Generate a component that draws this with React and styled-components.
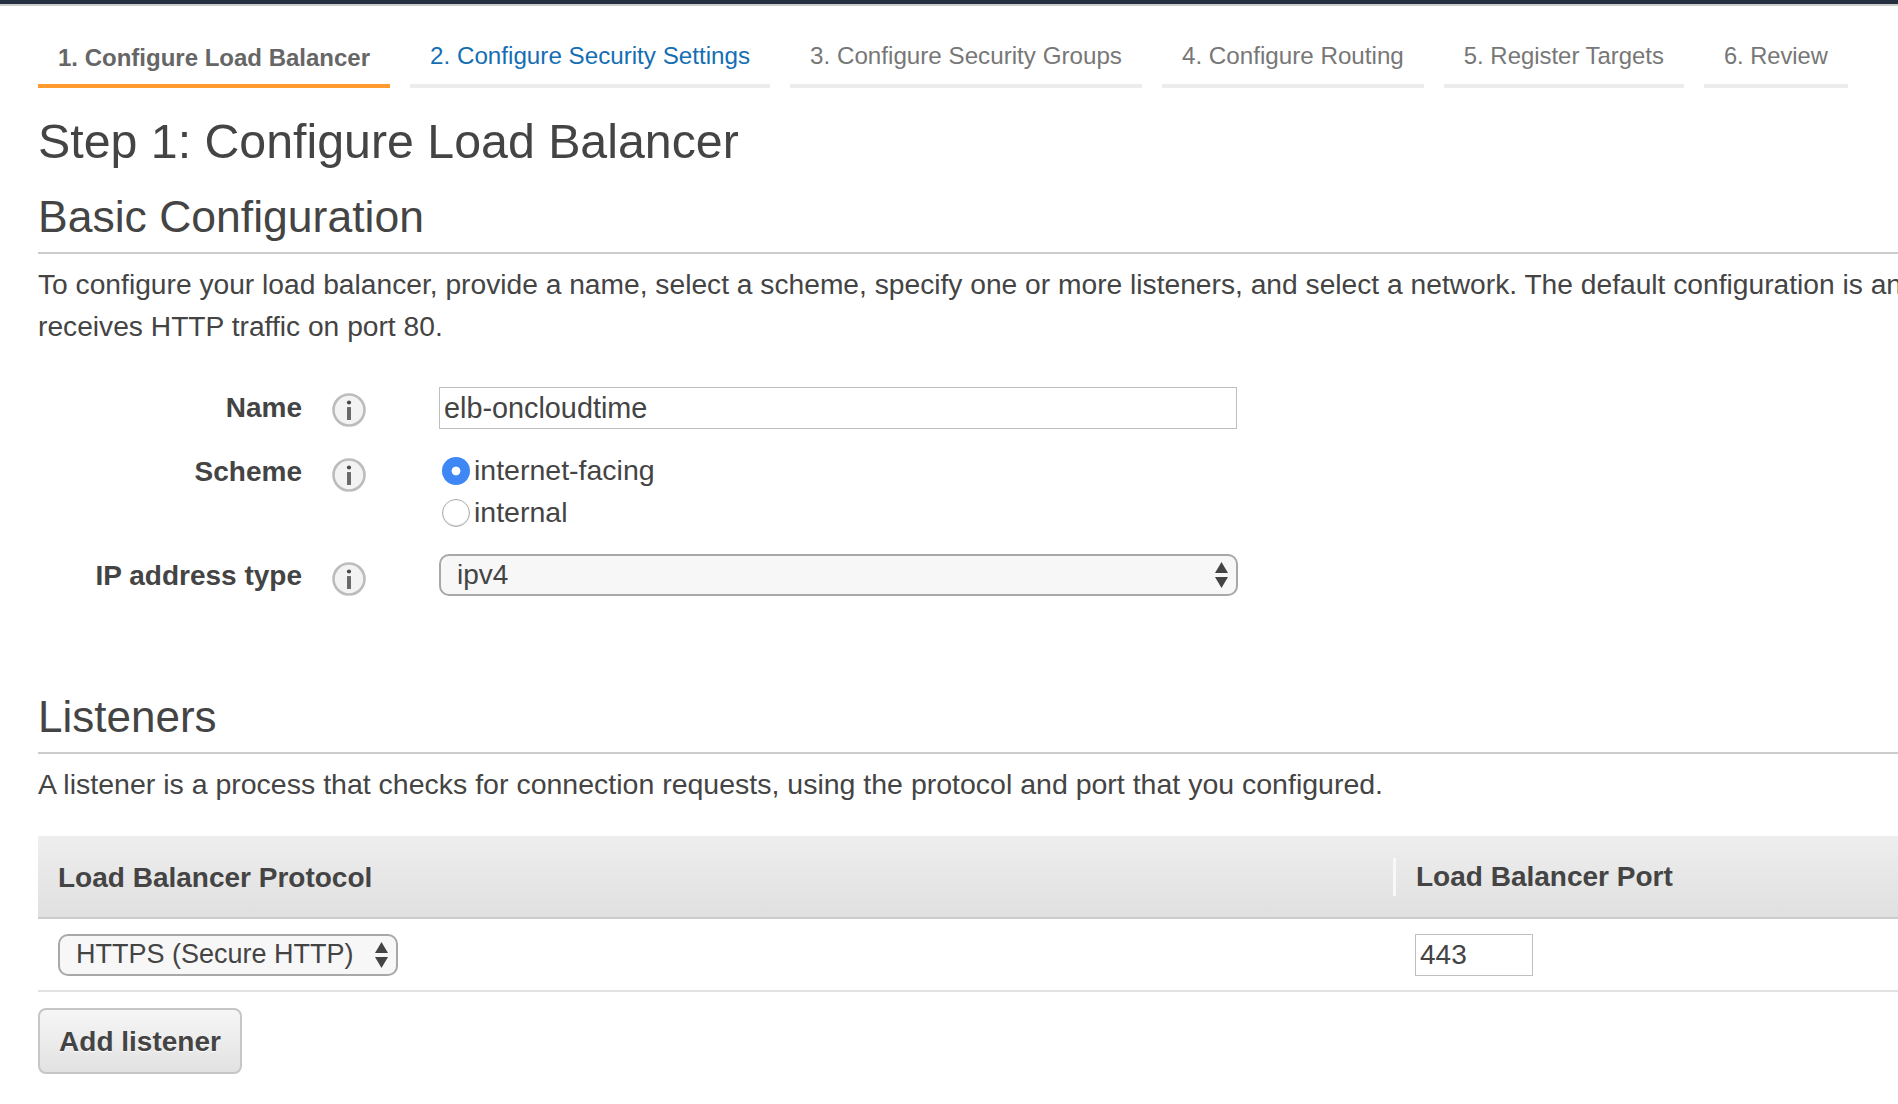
import styled, { createGlobalStyle } from "styled-components";

const GlobalStyle = createGlobalStyle`
    html, body {
        margin: 0;
        background: #fff;
        overflow-x: hidden;
    }
    body {
        font-family: "Liberation Sans", Arial, sans-serif;
        color: #444;
    }
`

const steps = [
    { label: "1. Configure Load Balancer", state: "active", size: "24px" },
    { label: "2. Configure Security Settings", state: "link", size: "24.2px" },
    { label: "3. Configure Security Groups", size: "24.2px" },
    { label: "4. Configure Routing", size: "24.2px" },
    { label: "5. Register Targets", size: "23.9px" },
    { label: "6. Review", size: "23.7px" },
]

export default function App() {
    return (
        <>
            <GlobalStyle />
            <TopBar />
            <Page>
                <Tabs>
                    {steps.map((s) => <Tab key={s.label} $state={s.state} $size={s.size}>{s.label}</Tab>)}
                </Tabs>
                <Title>Step 1: Configure Load Balancer</Title>
                <Section $size="44.5px">Basic Configuration</Section>
                <Text>
                    <div>To configure your load balancer, provide a name, select a scheme, specify one or more listeners, and select a network. The default configuration is an</div>
                    <div>receives HTTP traffic on port 80.</div>
                </Text>
                <Form>
                    <FormRow>
                        <Label>Name</Label>
                        <InfoIcon />
                        <TextBox>elb-oncloudtime</TextBox>
                    </FormRow>
                    <FormRow $shift>
                        <Label $low>Scheme</Label>
                        <InfoIcon low />
                        <div>
                            <RadioRow><Radio $checked /><RadioText>internet-facing</RadioText></RadioRow>
                            <RadioRow><Radio /><RadioText>internal</RadioText></RadioRow>
                        </div>
                    </FormRow>
                    <FormRow>
                        <Label $low>IP address type</Label>
                        <InfoIcon low />
                        <Select $pad="16px">ipv4<Arrows /></Select>
                    </FormRow>
                </Form>
                <Section $gap $size="44px">Listeners</Section>
                <Text $wide>
                    <div>A listener is a process that checks for connection requests, using the protocol and port that you configured.</div>
                </Text>
                <TableHead>
                    <HeadCell>Load Balancer Protocol</HeadCell>
                    <Divided>Load Balancer Port</Divided>
                </TableHead>
                <TableRow>
                    <Cell>
                        <Select $pad="16px" $width="340px" $small>HTTPS (Secure HTTP)<Arrows /></Select>
                    </Cell>
                    <Cell $second>
                        <PortBox>443</PortBox>
                    </Cell>
                </TableRow>
                <AddButton>Add listener</AddButton>
            </Page>
        </>
    )
}

function InfoIcon({ low }) {
    return (
        <IconWrap $low={low}>
            <svg width="36" height="36" viewBox="0 0 36 36">
                <circle cx="18" cy="18" r="15.5" fill="#f3f3f3" stroke="#bcbcbc" strokeWidth="2.6" />
                <circle cx="18" cy="10.5" r="2.1" fill="#4a4a4a" />
                <rect x="16" y="15" width="4" height="13" rx="0.5" fill="#6a6a6a" />
            </svg>
        </IconWrap>
    )
}

function Arrows() {
    return (
        <svg width="13" height="26" viewBox="0 0 13 26">
            <path d="M6.5 0L13 11H0Z" fill="#444" />
            <path d="M0 15H13L6.5 26Z" fill="#444" />
        </svg>
    )
}

const TopBar = styled.div`
    height: 4px;
    background: #232f3e;
    border-bottom: 2px solid #ccc;
`

const Page = styled.div`
    padding-left: 38px;
    padding-bottom: 30px;
`

const Tabs = styled.div`
    display: flex;
    gap: 20px;
    padding-top: 22px;
`

const Tab = styled.div`
    padding: ${(p) => (p.$state === "active" ? "16px 20px 12px" : "14px 20px 14px")};
    font-size: ${(p) => p.$size};
    line-height: 28px;
    white-space: nowrap;
    font-weight: ${(p) => (p.$state === "active" ? "700" : "400")};
    color: ${(p) => (p.$state === "active" ? "#666" : p.$state === "link" ? "#146eb4" : "#777")};
    border-bottom: 4px solid ${(p) => (p.$state === "active" ? "#ff9a2e" : "#ececec")};
`

const Title = styled.h1`
    margin: 25px 0 0;
    font-size: 48.3px;
    font-weight: 400;
    line-height: 56px;
    color: #444;
`

const Section = styled.h2`
    margin: ${(p) => (p.$gap ? "95px" : "23px")} 0 0;
    padding-bottom: 10px;
    font-size: ${(p) => p.$size};
    font-weight: 400;
    line-height: 50px;
    color: #444;
    border-bottom: 2px solid #ccc;
`

const Text = styled.div`
    margin-top: 9px;
    font-size: ${(p) => (p.$wide ? "28.5px" : "28.2px")};
    line-height: 42px;
    white-space: nowrap;
`

const Form = styled.div`
    display: flex;
    flex-direction: column;
    gap: 20px;
    margin-top: 40px;
`

const FormRow = styled.div`
    display: grid;
    grid-template-columns: 264px 137px 799px;
    align-items: start;
    margin-top: ${(p) => (p.$shift ? "1px" : "0")};
`

const Label = styled.div`
    padding-top: ${(p) => (p.$low ? "1px" : "0")};
    font-size: 28px;
    font-weight: 700;
    line-height: 42px;
    text-align: right;
`

const IconWrap = styled.div`
    display: flex;
    padding: ${(p) => (p.$low ? "7px" : "5px")} 0 0 29px;
`

const TextBox = styled.div`
    box-sizing: border-box;
    height: 42px;
    margin-right: 1px;
    padding: 0 4px;
    font-size: 28.8px;
    line-height: 41px;
    background: #fff;
    border: 1.5px solid #c0c0c0;
`

const RadioRow = styled.div`
    display: flex;
    align-items: center;
    height: 42px;
    padding-left: 3px;
    font-size: 28.5px;
`

const RadioText = styled.span`
    margin-bottom: 2px;
`

const Radio = styled.span`
    box-sizing: border-box;
    width: 28px;
    height: 28px;
    margin-right: 4px;
    border-radius: 50%;
    background: ${(p) => (p.$checked ? "radial-gradient(circle, #fff 0 4px, #3f87f5 4.8px)" : "#fff")};
    border: ${(p) => (p.$checked ? "none" : "1px solid #aaa")};
    box-shadow: ${(p) => (p.$checked ? "none" : "inset 0 -1px 1px #ddd")};
`

const Select = styled.div`
    box-sizing: border-box;
    display: flex;
    align-items: center;
    justify-content: space-between;
    width: ${(p) => p.$width || "100%"};
    height: 42px;
    padding: 0 8px 0 ${(p) => p.$pad};
    font-size: ${(p) => (p.$small ? "27px" : "28px")};
    background: #f7f7f7;
    border: 2px solid #a8a8a8;
    border-radius: 10px;
`

const TableHead = styled.div`
    display: grid;
    grid-template-columns: 1355px 1fr;
    align-items: center;
    box-sizing: border-box;
    height: 83px;
    margin-top: 31px;
    font-size: 28px;
    font-weight: 700;
    background: linear-gradient(#eee, #e0e0e0);
    border-bottom: 2px solid #ccc;
`

const HeadCell = styled.div`
    padding: 2px 0 0 20px;
`

const Divided = styled.div`
    padding-left: 20px;
    line-height: 38px;
    border-left: 3px solid #f8f8f8;
`

const TableRow = styled.div`
    display: grid;
    grid-template-columns: 1355px 1fr;
    align-items: center;
    box-sizing: border-box;
    height: 73px;
    border-bottom: 2px solid #e2e2e2;
`

const Cell = styled.div`
    padding-left: ${(p) => (p.$second ? "22px" : "20px")};
`

const PortBox = styled.div`
    box-sizing: border-box;
    width: 118px;
    height: 42px;
    padding: 0 4px;
    font-size: 28px;
    line-height: 40px;
    border: 1.5px solid #c0c0c0;
`

const AddButton = styled.button`
    display: block;
    box-sizing: border-box;
    width: 204px;
    height: 66px;
    margin-top: 16px;
    padding: 2px 0 0;
    font-family: inherit;
    font-size: 28px;
    font-weight: 700;
    color: #444;
    text-shadow: 0 1px 0 #fff;
    background: linear-gradient(#f6f6f6, #e2e2e2);
    border: 2px solid #c6c6c6;
    border-radius: 8px;
`
